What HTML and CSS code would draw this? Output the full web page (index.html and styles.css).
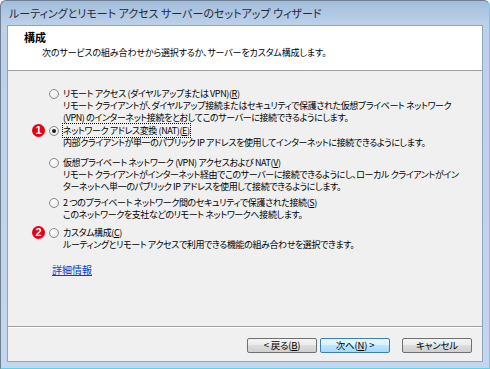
FILE: index.html
```html
<!DOCTYPE html>
<html lang="ja">
<head>
    <meta charset="UTF-8">
    <title>ルーティングとリモート アクセス サーバーのセットアップ ウィザード</title>
    <link rel="stylesheet" href="styles.css">
</head>
<body>
    <div class="window">
        <div class="titlebar">ルーティングとリモート アクセス サーバーのセットアップ ウィザード</div>
        <div class="client">
            <div class="header">
                <div class="header-title">構成</div>
                <div class="header-sub">次のサービスの組み合わせから選択するか、サーバーをカスタム構成します。</div>
            </div>

            <div class="content">
                <div class="option opt1">
                    <span class="radio"></span>
                    <div class="option-text">
                        <div class="option-label">リモート アクセス (ダイヤルアップまたは VPN)(<u>R</u>)</div>
                        <div class="option-desc">リモート クライアントが、ダイヤルアップ接続またはセキュリティで保護された仮想プライベート ネットワーク<br>(VPN) のインターネット接続をとおしてこのサーバーに接続できるようにします。</div>
                    </div>
                </div>
                <div class="option opt2">
                    <span class="badge">1</span>
                    <span class="radio checked"></span>
                    <div class="option-text">
                        <div class="option-label"><span class="focus">ネットワーク アドレス変換 (NAT)(<u>E</u>)</span></div>
                        <div class="option-desc">内部クライアントが単一のパブリック IP アドレスを使用してインターネットに接続できるようにします。</div>
                    </div>
                </div>
                <div class="option opt3">
                    <span class="radio"></span>
                    <div class="option-text">
                        <div class="option-label">仮想プライベート ネットワーク (VPN) アクセスおよび NAT(<u>V</u>)</div>
                        <div class="option-desc">リモート クライアントがインターネット経由でこのサーバーに接続できるようにし、ローカル クライアントがイン<br>ターネットへ単一のパブリック IP アドレスを使用して接続できるようにします。</div>
                    </div>
                </div>
                <div class="option opt4">
                    <span class="radio"></span>
                    <div class="option-text">
                        <div class="option-label">2 つのプライベート ネットワーク間のセキュリティで保護された接続(<u>S</u>)</div>
                        <div class="option-desc">このネットワークを支社などのリモート ネットワークへ接続します。</div>
                    </div>
                </div>
                <div class="option opt5">
                    <span class="badge">2</span>
                    <span class="radio"></span>
                    <div class="option-text">
                        <div class="option-label">カスタム構成(<u>C</u>)</div>
                        <div class="option-desc">ルーティングとリモート アクセスで利用できる機能の組み合わせを選択できます。</div>
                    </div>
                </div>
                <a class="more-link" href="#">詳細情報</a>
            </div>

            <div class="footer">
                <button class="btn">&lt; 戻る(<u>B</u>)</button>
                <button class="btn btn-default">次へ(<u>N</u>) &gt;</button>
                <button class="btn btn-cancel">キャンセル</button>
            </div>
        </div>
    </div>
</body>
</html>
```

FILE: styles.css
```css
* {
    margin: 0;
    padding: 0;
    box-sizing: border-box;
}

body {
    background: #ffffff;
    font-family: "Noto Sans CJK JP", "Noto Sans", sans-serif;
    font-feature-settings: "palt";
    color: #000000;
}

.window {
    width: 490px;
    height: 369px;
    display: flex;
    flex-direction: column;
    background: linear-gradient(#a3bdda, #bcd1ea 24px, #c3d6ed);
    border: 1px solid #6e7e94;
    border-right-color: #4fd9ea;
    border-bottom-color: #4fd9ea;
    border-radius: 6px 6px 0 0;
}

.titlebar {
    height: 24px;
    padding-left: 8px;
    font-size: 11px;
    line-height: 25px;
    color: #1e2a3a;
    white-space: nowrap;
}

.client {
    flex: 1;
    margin: 0 6px 6px 6px;
    display: flex;
    flex-direction: column;
    background: #f0f0f0;
    border: 1px solid #8fa5bd;
}

.header {
    height: 45px;
    background: #ffffff;
    border-bottom: 1px solid #a0a0a0;
    padding-top: 5px;
    line-height: 13px;
    white-space: nowrap;
}

.header-title {
    padding-left: 16px;
    font-size: 11px;
    font-weight: bold;
}

.header-sub {
    padding-left: 34px;
    margin-top: 2px;
    font-size: 9px;
    letter-spacing: -0.15px;
}

.content {
    flex: 1;
    padding: 17px 0 0 41px;
    font-size: 9px;
    letter-spacing: -0.4px;
    line-height: 12px;
    white-space: nowrap;
}

.option {
    position: relative;
    display: flex;
    gap: 4px;
}

.opt2 { margin-top: 1px; }
.opt3 { margin-top: 8px; }
.opt4 { margin-top: 4px; }
.opt5 { margin-top: 6px; }

.radio {
    flex: none;
    width: 10px;
    height: 10px;
    margin-top: 1px;
    border-radius: 50%;
    border: 1px solid #8c8c8c;
    background: radial-gradient(circle at 40% 35%, #ffffff, #e2e2e2);
    display: flex;
    justify-content: center;
    align-items: center;
}

.radio.checked::after {
    content: "";
    width: 4px;
    height: 4px;
    border-radius: 50%;
    background: #1a1a1a;
}

.focus {
    outline: 1px dotted #000000;
    outline-offset: 0;
}

.badge {
    position: absolute;
    left: -17px;
    top: -1px;
    width: 13px;
    height: 13px;
    border-radius: 50%;
    background: #e60012;
    color: #ffffff;
    font-family: "Liberation Sans", sans-serif;
    font-size: 11px;
    font-weight: bold;
    line-height: 13px;
    text-align: center;
    letter-spacing: 0;
}

.more-link {
    display: inline-block;
    margin: 13px 0 0 3px;
    font-size: 10px;
    letter-spacing: 0;
    color: #0044cc;
    text-decoration: underline;
}

.footer {
    height: 35px;
    border-top: 1px solid #a0a0a0;
    box-shadow: inset 0 1px 0 #ffffff;
    display: flex;
    justify-content: flex-end;
    align-items: flex-start;
    padding: 11px 10px 0 0;
}

.btn {
    width: 70px;
    height: 15px;
    font-family: "Noto Sans CJK JP", sans-serif;
    font-feature-settings: "palt";
    font-size: 9.5px;
    letter-spacing: -0.2px;
    line-height: 13px;
    color: #000000;
    border: 1px solid #707070;
    border-radius: 2px;
    background: linear-gradient(#f3f3f3, #ebebeb 50%, #dddddd 50%, #cfcfcf);
}

.btn-default {
    margin-left: 3px;
    border-color: #3c7fb1;
    background: linear-gradient(#eaf6fd, #d9f0fc 50%, #bee6fd 50%, #a7d9f5);
}

.btn-cancel {
    margin-left: 12px;
}
```
